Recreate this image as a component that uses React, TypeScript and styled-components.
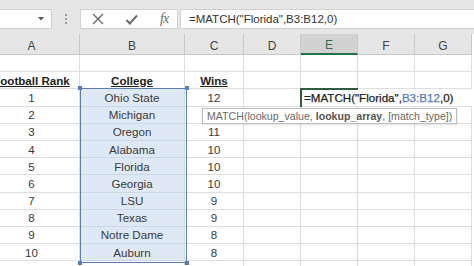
import React from 'react';
import styled, { createGlobalStyle } from 'styled-components';

const GlobalStyle = createGlobalStyle`
  html, body {
    margin: 0;
    padding: 0;
    background: #ffffff;
  }
  body {
    font-family: "Liberation Sans", Arial, sans-serif;
  }
`;

const ROW_H = 17.2;
const HEAD_H = 21;
const COLS = [96, 105, 59, 57, 57, 57, 57];
const LETTERS = ['A', 'B', 'C', 'D', 'E', 'F', 'G'];

const colLeft = (i: number) => COLS.slice(0, i).reduce((a, b) => a + b, 0);

const Window = styled.div`
  width: 474px;
  height: 266px;
  overflow: hidden;
  background: #ffffff;
`;

const Toolbar = styled.div`
  height: 34px;
  background: #e6e6e6;
  display: flex;
  align-items: flex-start;
  padding-top: 9px;
  box-sizing: border-box;
`;

const NameBox = styled.div`
  width: 52px;
  height: 20px;
  background: #ffffff;
  border: 1px solid #d0d0d0;
  border-left: none;
  box-sizing: border-box;
  display: flex;
  align-items: center;
  justify-content: flex-end;
  padding-right: 7px;
`;

const Grip = styled.div`
  width: 28px;
  height: 20px;
  display: flex;
  flex-direction: column;
  align-items: center;
  justify-content: center;
  gap: 2px;

  span {
    width: 2px;
    height: 2px;
    background: #9a9a9a;
  }
`;

const ButtonBox = styled.div`
  width: 98px;
  height: 20px;
  background: #ffffff;
  border: 1px solid #d0d0d0;
  box-sizing: border-box;
  display: flex;
  align-items: center;
  padding-left: 11px;
  gap: 21px;
  color: #6a6a6a;
`;

const Fx = styled.span`
  font-family: "Liberation Serif", "Times New Roman", serif;
  font-style: italic;
  font-size: 14px;
  color: #6a6a6a;
  margin-left: 1px;
  letter-spacing: -1px;
`;

const FormulaBox = styled.div`
  flex: 1;
  height: 20px;
  margin-left: 2px;
  background: #ffffff;
  border: 1px solid #d0d0d0;
  border-right: none;
  box-sizing: border-box;
  display: flex;
  align-items: center;
  padding-left: 8px;
  font-size: 11.5px;
  color: #333333;
  white-space: nowrap;
`;

const Sheet = styled.div`
  position: relative;
  margin-left: -16px;
  display: grid;
  grid-template-columns: ${COLS.map((c) => `${c}px`).join(' ')};
  grid-template-rows: ${HEAD_H}px repeat(13, ${ROW_H}px);
`;

const ColHead = styled.div<{ $active?: boolean }>`
  background: ${(p) => (p.$active ? '#d2d2d2' : '#e6e6e6')};
  border-right: 1px solid #c8c8c8;
  border-bottom: ${(p) => (p.$active ? '2px solid #217346' : '1px solid #c8c8c8')};
  box-sizing: border-box;
  display: flex;
  align-items: center;
  justify-content: center;
  font-size: 12px;
  color: ${(p) => (p.$active ? '#2c6e46' : '#444444')};
  padding-top: 3px;
`;

const Cell = styled.div<{ $sel?: boolean; $bold?: boolean }>`
  background: ${(p) => (p.$sel ? '#dfe9f5' : '#ffffff')};
  border-right: 1px solid ${(p) => (p.$sel ? '#ccd8e8' : '#dedede')};
  border-bottom: 1px solid ${(p) => (p.$sel ? '#ccd8e8' : '#dedede')};
  box-sizing: border-box;
  display: flex;
  align-items: center;
  justify-content: center;
  font-size: 11.6px;
  font-weight: ${(p) => (p.$bold ? 700 : 400)};
  text-decoration: ${(p) => (p.$bold ? 'underline' : 'none')};
  color: ${(p) => (p.$bold ? '#222222' : '#3a3a3a')};
  white-space: nowrap;
  overflow: hidden;
`;

const FormulaCell = styled.div`
  grid-column: 5 / span 3;
  background: #ffffff;
  border-bottom: 1px solid #dedede;
  box-sizing: border-box;
  display: flex;
  align-items: center;
  padding-left: 3px;
  font-size: 11.6px;
  color: #222222;
  white-space: nowrap;
  -webkit-text-stroke: 0.25px #222222;

  b {
    font-weight: 400;
    color: #5479b8;
    -webkit-text-stroke: 0.25px #5479b8;
  }
`;

const Selection = styled.div`
  position: absolute;
  border: 1px solid #5c7db0;
  pointer-events: none;
`;

const Handle = styled.span<{ $x: 'l' | 'r'; $y: 't' | 'b' }>`
  position: absolute;
  width: 4px;
  height: 4px;
  background: #5c7db0;
  ${(p) => (p.$x === 'l' ? 'left: -3px;' : 'right: -3px;')}
  ${(p) => (p.$y === 't' ? 'top: -3px;' : 'bottom: -3px;')}
`;

const ActiveCell = styled.div`
  position: absolute;
  border-left: 2px solid #2f5b3f;
  border-top: 2px solid #2f5b3f;
  box-sizing: border-box;
  pointer-events: none;
`;

const Tooltip = styled.div`
  position: absolute;
  height: 16px;
  background: #ffffff;
  border: 1px solid #bdbdbd;
  box-shadow: 0 1px 2px rgba(0, 0, 0, 0.12);
  box-sizing: border-box;
  display: flex;
  align-items: center;
  padding: 0 4px;
  font-size: 10.6px;
  color: #6a6a6a;
  white-space: nowrap;

  b {
    color: #555555;
  }
`;

// Michigan's wins sit under the tooltip and are not visible
const data: [string, string, string][] = [
  ['1', 'Ohio State', '12'],
  ['2', 'Michigan', ''],
  ['3', 'Oregon', '11'],
  ['4', 'Alabama', '10'],
  ['5', 'Florida', '10'],
  ['6', 'Georgia', '10'],
  ['7', 'LSU', '9'],
  ['8', 'Texas', '9'],
  ['9', 'Notre Dame', '8'],
  ['10', 'Auburn', '8'],
];

const blanks = (n: number, key: string) =>
  Array.from({ length: n }, (_, i) => <Cell key={`${key}-${i}`} />);

const App: React.FC = () => {
  const rows: React.ReactNode[] = [];

  // row 1: empty
  rows.push(...blanks(7, 'r1'));

  // row 2: headers
  rows.push(
    <Cell key="h-a" $bold>Football Rank</Cell>,
    <Cell key="h-b" $bold>College</Cell>,
    <Cell key="h-c" $bold>Wins</Cell>,
    ...blanks(4, 'r2'),
  );

  data.forEach(([rank, college, wins], i) => {
    rows.push(
      <Cell key={`a${i}`}>{rank}</Cell>,
      <Cell key={`b${i}`} $sel>{college}</Cell>,
      <Cell key={`c${i}`}>{wins}</Cell>,
      <Cell key={`d${i}`} />,
    );
    if (i === 0) {
      rows.push(
        <FormulaCell key="formula">
          =MATCH("Florida",<b>B3:B12</b>,0)
        </FormulaCell>,
      );
    } else {
      rows.push(...blanks(3, `r${i + 3}`));
    }
  });

  rows.push(...blanks(7, 'r13'));

  const selTop = HEAD_H + 2 * ROW_H;

  return (
    <Window>
      <GlobalStyle />
      <Toolbar>
        <NameBox>
          <svg width="6" height="4" viewBox="0 0 6 4">
            <path d="M0 0 L6 0 L3 3.5 Z" fill="#555" />
          </svg>
        </NameBox>
        <Grip>
          <span />
          <span />
          <span />
        </Grip>
        <ButtonBox>
          <svg width="12" height="12" viewBox="0 0 12 12">
            <path d="M1 1 L11 11 M11 1 L1 11" stroke="#6a6a6a" strokeWidth="1.4" />
          </svg>
          <svg width="13" height="11" viewBox="0 0 13 11">
            <path d="M1.5 6 L4.8 9.5 L12 1.5" stroke="#6a6a6a" strokeWidth="2" fill="none" />
          </svg>
          <Fx>fx</Fx>
        </ButtonBox>
        <FormulaBox>=MATCH("Florida",B3:B12,0)</FormulaBox>
      </Toolbar>

      <Sheet>
        {LETTERS.map((l) => (
          <ColHead key={l} $active={l === 'E'}>
            {l}
          </ColHead>
        ))}
        {rows}

        <Selection
          style={{
            left: colLeft(1),
            top: selTop - 1,
            width: COLS[1],
            height: ROW_H * 10 + 1,
          }}
        >
          <Handle $x="l" $y="t" />
          <Handle $x="r" $y="t" />
          <Handle $x="l" $y="b" />
          <Handle $x="r" $y="b" />
        </Selection>

        <ActiveCell
          style={{
            left: colLeft(4) - 1,
            top: selTop - 1,
            width: COLS[4] + 1,
            height: ROW_H + 1,
          }}
        />

        <Tooltip style={{ left: 218, top: selTop + ROW_H + 1, width: 255 }}>
          MATCH(lookup_value,&nbsp;<b>lookup_array</b>,&nbsp;[match_type])
        </Tooltip>
      </Sheet>
    </Window>
  );
};

export default App;
